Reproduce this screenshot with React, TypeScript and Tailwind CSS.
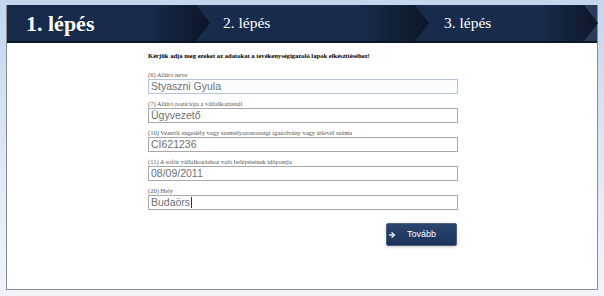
import { ArrowRight } from "lucide-react";

const fields = [
  { label: "(6) Aláíró neve", value: "Styaszni Gyula", active: true },
  { label: "(7) Aláíró pozíciója a vállalkozásnál", value: "Ügyvezető" },
  { label: "(10) Vezetői engedély vagy személyazonossági igazolvány vagy útlevél száma", value: "CI621236" },
  { label: "(11) A sofőr vállalkozáshoz való belépésének időpontja", value: "08/09/2011" },
  { label: "(20) Hely", value: "Budaörs", caret: true },
];

const App = () => {
  return (
    <div className="h-[296px] w-[604px] overflow-hidden bg-gradient-to-b from-[#c3d6ee] via-[#dce7f5] to-[#f1f5fb] pl-[6px] pt-[5px]">
      <div className="flex h-[285px] w-[592px] flex-col border-x border-b border-[#8c8c8c] bg-white">
        {/* Steps header */}
        <div className="flex h-[38px] shrink-0 border-b-2 border-[#0b1628] bg-[#2a3c5b]">
          <div className="relative z-30 flex w-[203px] shrink-0 items-center bg-gradient-to-r from-[#172a4b] from-70% to-[#0b1526] pl-[19px] [clip-path:polygon(0_0,calc(100%-14px)_0,100%_50%,calc(100%-14px)_100%,0_100%)]">
            <span className="text-[22px] font-bold text-white [font-family:'Liberation_Serif',serif]">1. lépés</span>
          </div>
          <div className="relative z-20 -ml-[14px] flex w-[233px] shrink-0 items-center bg-gradient-to-r from-[#182b4c] from-70% to-[#0c1628] pl-[27px] [clip-path:polygon(0_0,calc(100%-14px)_0,100%_50%,calc(100%-14px)_100%,0_100%)]">
            <span className="text-[15.5px] text-white [font-family:'Liberation_Serif',serif]">2. lépés</span>
          </div>
          <div className="relative z-10 -ml-[14px] flex w-[183px] shrink-0 items-center bg-gradient-to-r from-[#182b4c] from-70% to-[#0c1628] pl-[29px] [clip-path:polygon(0_0,calc(100%-14px)_0,100%_50%,calc(100%-14px)_100%,0_100%)]">
            <span className="text-[15.5px] text-white [font-family:'Liberation_Serif',serif]">3. lépés</span>
          </div>
        </div>

        {/* Form */}
        <div className="flex w-[451px] flex-col pl-[141px] pt-[8px]">
          <p className="text-[6.6px] leading-[9px] font-bold text-black [font-family:'Liberation_Serif',serif]">
            Kérjük adja meg ezeket az adatokat a tevékenységigazoló lapok elkészítéséhez!
          </p>
          <div className="mt-[10px] flex flex-col gap-[5px]">
            {fields.map((f) => (
              <div key={f.label} className="flex flex-col">
                <label className="h-[9px] text-[6.5px] leading-[9px] text-[#555] [font-family:'Liberation_Serif',serif]">{f.label}</label>
                <div
                  className={
                    f.active
                      ? "flex h-[15px] items-center border border-[#b3c4da] bg-[#fbfcfe] pl-[2px] text-[10.5px] text-[#707070] [font-family:'Liberation_Sans',sans-serif]"
                      : "flex h-[15px] items-center border border-[#a9a9a9] bg-white pl-[2px] text-[10.5px] text-[#707070] [font-family:'Liberation_Sans',sans-serif]"
                  }
                >
                  {f.value}
                  {f.caret && <span className="ml-px h-[11px] w-px bg-[#333]" />}
                </div>
              </div>
            ))}
          </div>
          <div className="mt-[13px] flex justify-end pr-px">
            <button className="flex h-[23px] w-[71px] items-center rounded-[2px] border border-[#4a6286] bg-gradient-to-b from-[#2a4670] to-[#1b335a] shadow-[0_1px_3px_rgba(150,150,120,0.5)]">
              <ArrowRight className="ml-[1px] h-[8px] w-[8px] text-[#e8eef8]" strokeWidth={4} />
              <span className="ml-[11px] text-[9px] text-white [font-family:'Liberation_Sans',sans-serif]">Tovább</span>
            </button>
          </div>
        </div>
      </div>
    </div>
  );
};

export default App;
